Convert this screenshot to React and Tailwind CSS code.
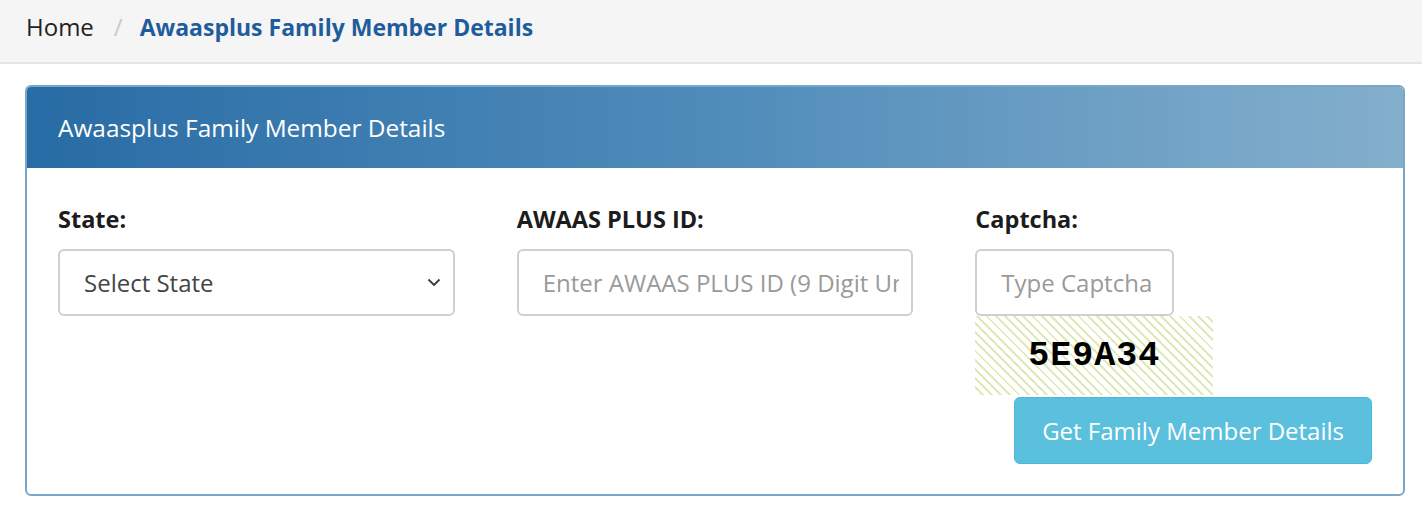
import React, { useState } from "react";

const font = { fontFamily: '"Open Sans", "Noto Sans", sans-serif' };

function Chevron() {
  return (
    <svg width="14" height="9" viewBox="0 0 14 9" fill="none" className="shrink-0">
      <path d="M1.5 1.5L7 7L12.5 1.5" stroke="#3a3a3a" strokeWidth="1.8" />
    </svg>
  );
}

export default function App() {
  const [state, setState] = useState("");
  const [awaasId, setAwaasId] = useState("");
  const [captcha, setCaptcha] = useState("");

  return (
    <div className="min-h-[524px] bg-white text-[#212529]" style={font}>
      {/* breadcrumb */}
      <div className="h-[64px] bg-[#f5f5f5] border-b-2 border-[#e4e4e4] flex items-center pl-[26px] pb-[8px]">
        <span className="text-[24px] text-[#222]">Home</span>
        <span className="text-[24px] text-[#c8c8c8] ml-[20px] mr-[17px]">/</span>
        <span className="text-[23px] font-bold text-[#1f5c9c]">Awaasplus Family Member Details</span>
      </div>

      {/* card */}
      <div className="mt-[21px] ml-[25px] mr-[17px] border-2 border-[#79a7cc] rounded-[6px] overflow-hidden">
        <div className="h-[81px] bg-linear-to-r from-[#286ca5] via-[#4f8cba] to-[#84afcc] flex items-center pl-[31px] pt-[2px]">
          <h2 className="text-white text-[24.4px]">Awaasplus Family Member Details</h2>
        </div>

        <div className="px-[31px] pt-[34px] pb-[30px]">
          <div className="flex gap-[62px]">
            <div className="w-[397px]">
              <label className="block font-bold text-[23.5px] text-[#1c1c1c] mb-[12px]">State:</label>
              <div className="relative h-[67px] border-2 border-[#cfcfcf] rounded-[6px] flex items-center justify-between pl-[24px] pr-[12px]">
                <select
                  value={state}
                  onChange={(e) => setState(e.target.value)}
                  className="absolute inset-0 opacity-0 w-full"
                >
                  <option value="">Select State</option>
                </select>
                <span className="text-[24px] text-[#444]">Select State</span>
                <Chevron />
              </div>
            </div>

            <div className="w-[397px]">
              <label className="block font-bold text-[23.5px] text-[#1c1c1c] mb-[12px]">AWAAS PLUS ID:</label>
              <input
                value={awaasId}
                onChange={(e) => setAwaasId(e.target.value)}
                placeholder="Enter AWAAS PLUS ID (9 Digit Unique ID)"
                className="w-full h-[67px] border-2 border-[#cfcfcf] rounded-[6px] pl-[24px] pr-[12px] text-[24px] outline-none placeholder:text-[#9a9a9a]"
              />
            </div>

            <div className="w-[397px]">
              <label className="block font-bold text-[23.5px] text-[#1c1c1c] mb-[12px]">Captcha:</label>
              <input
                value={captcha}
                onChange={(e) => setCaptcha(e.target.value)}
                placeholder="Type Captcha"
                className="w-[199px] h-[67px] border-2 border-[#cfcfcf] rounded-[6px] pl-[24px] pr-[12px] text-[24px] outline-none placeholder:text-[#9a9a9a]"
              />
              <div className="w-[238px] h-[79px] flex items-center justify-center bg-[repeating-linear-gradient(45deg,#ffffff_0px,#ffffff_4.5px,#dfeab8_4.5px,#dfeab8_6.5px)]">
                <span
                  className="text-[35px] font-bold text-black tracking-[1px]"
                  style={{ fontFamily: '"Courier New", "Liberation Mono", monospace' }}
                >
                  5E9A34
                </span>
              </div>
              <div className="flex justify-end mt-[2px]">
                <button className="h-[67px] px-[27px] bg-[#5bc0de] border border-[#46b8da] rounded-[6px] text-white text-[24px]">
                  Get Family Member Details
                </button>
              </div>
            </div>
          </div>
        </div>
      </div>
    </div>
  );
}
